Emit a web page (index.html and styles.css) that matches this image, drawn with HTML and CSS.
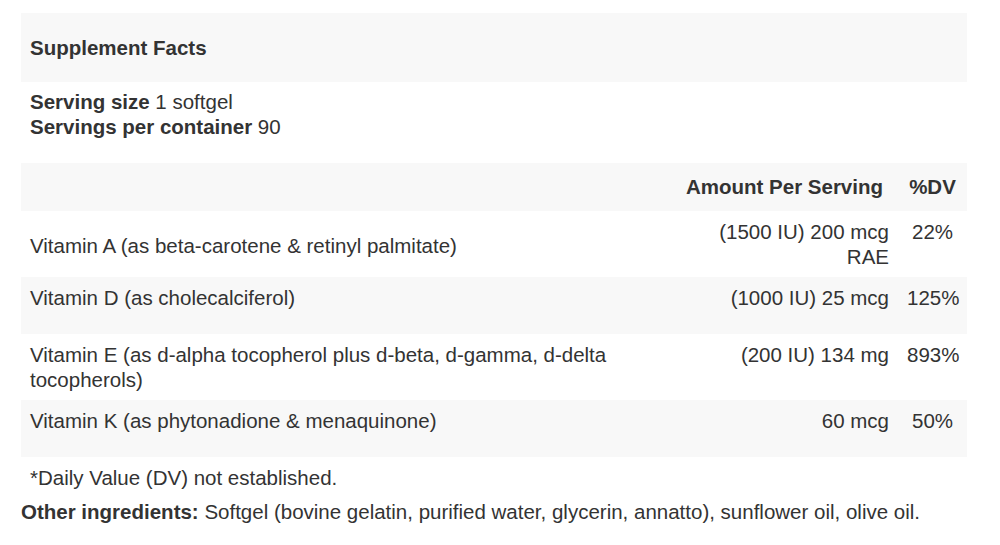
FILE: index.html
```html
<!DOCTYPE html>
<html lang="en">
<head>
<meta charset="utf-8">
<title>Supplement Facts</title>
<link rel="stylesheet" href="styles.css">
</head>
<body>
<div class="facts">
  <div class="title-band"><strong>Supplement Facts</strong></div>
  <div class="serving">
    <div><strong>Serving size</strong> 1 softgel</div>
    <div><strong>Servings per container</strong> 90</div>
  </div>
  <div class="table">
    <div class="row head">
      <div class="cell name"></div>
      <div class="cell amount"><strong>Amount Per Serving</strong></div>
      <div class="cell dv"><strong>%DV</strong></div>
    </div>
    <div class="row">
      <div class="cell name middle">Vitamin A (as beta-carotene &amp; retinyl palmitate)</div>
      <div class="cell amount">(1500 IU) 200 mcg RAE</div>
      <div class="cell dv">22%</div>
    </div>
    <div class="row alt">
      <div class="cell name">Vitamin D (as cholecalciferol)</div>
      <div class="cell amount">(1000 IU) 25 mcg</div>
      <div class="cell dv">125%</div>
    </div>
    <div class="row">
      <div class="cell name">Vitamin E (as d-alpha tocopherol plus d-beta, d-gamma, d-delta tocopherols)</div>
      <div class="cell amount">(200 IU) 134 mg</div>
      <div class="cell dv">893%</div>
    </div>
    <div class="row alt">
      <div class="cell name">Vitamin K (as phytonadione &amp; menaquinone)</div>
      <div class="cell amount">60 mcg</div>
      <div class="cell dv">50%</div>
    </div>
  </div>
  <div class="note">*Daily Value (DV) not established.</div>
  <div class="other"><strong>Other ingredients:</strong> Softgel (bovine gelatin, purified water, glycerin, annatto), sunflower oil, olive oil.</div>
</div>
</body>
</html>
```

FILE: styles.css
```css
html, body {
  margin: 0;
  padding: 0;
  background: #ffffff;
}

body {
  font-family: "Liberation Sans", Arial, sans-serif;
  font-size: 20.5px;
  line-height: 25px;
  color: #333333;
}

strong {
  font-weight: bold;
}

.facts {
  width: 946px;
  margin: 13px 0 0 21px;
}

.title-band {
  height: 69px;
  box-sizing: border-box;
  background: #f8f8f8;
  display: flex;
  align-items: center;
  padding: 0 9px 1px;
}

.serving {
  padding: 7px 9px 0;
  height: 72px;
  box-sizing: border-box;
  margin-bottom: 9px;
}

.table {
  display: flex;
  flex-direction: column;
}

.row {
  display: grid;
  grid-template-columns: 1fr 218px 69px;
  min-height: 57.5px;
}

.row.head {
  min-height: 48px;
  background: #f8f8f8;
}

.row.alt {
  background: #f8f8f8;
}

.cell {
  padding: 8px 9px 7.5px;
}

.cell.middle {
  align-self: center;
  padding-top: 10px;
}

.row.head .cell {
  padding-top: 11px;
  padding-bottom: 12px;
}

.amount {
  text-align: right;
}

.row.head .amount {
  padding-left: 0;
  padding-right: 15px;
  white-space: nowrap;
}

.dv {
  text-align: center;
}

.note {
  padding: 8px 9px 0;
}

.other {
  margin-top: 9px;
}
```
